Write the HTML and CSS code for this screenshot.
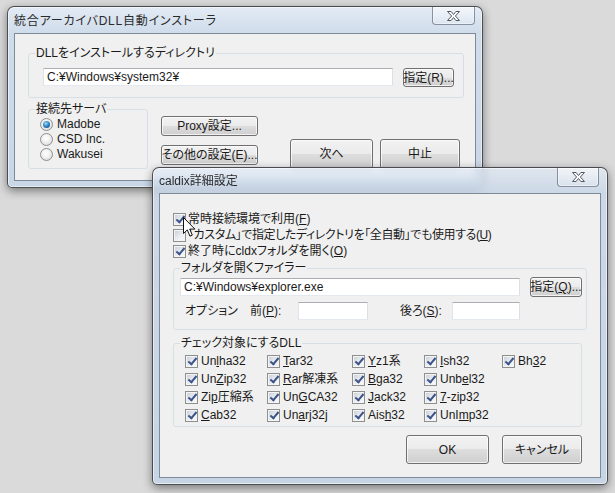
FILE: index.html
```html
<!DOCTYPE html>
<html lang="ja">
<head>
  <meta charset="UTF-8">
  <title>統合アーカイバDLL自動インストーラ</title>
  <link rel="stylesheet" href="styles.css">
</head>
<body>
<div class="desktop">

  <!-- メインウィンドウ -->
  <div class="window main-win">
    <div class="titlebar">
      <span class="title main-title">統合アーカイバDLL自動インストーラ</span>
      <span class="close">
        <svg width="15" height="12" viewBox="0 0 15 12"><path d="M1.5 1.5h3.6l2.4 3 2.4-3h3.6l-4.1 4.5 4.1 4.5h-3.6l-2.4-3-2.4 3H1.5l4.1-4.5z" fill="#fafbfc" stroke="#55595f" stroke-width="1" stroke-linejoin="round"/></svg>
      </span>
    </div>
    <div class="client main-client">
      <fieldset class="group dir-group">
        <legend>DLLをインストールするディレクトリ</legend>
        <div class="group-body dir-body">
          <div class="field dir-field">C:¥Windows¥system32¥</div>
          <span class="btn ref-btn">指定(R)...</span>
        </div>
      </fieldset>
      <div class="lower">
        <fieldset class="group server-group">
          <legend>接続先サーバ</legend>
          <div class="group-body server-body">
            <label class="radio on"><span class="dot"></span><span>Madobe</span></label>
            <label class="radio"><span class="dot"></span><span>CSD Inc.</span></label>
            <label class="radio"><span class="dot"></span><span>Wakusei</span></label>
          </div>
        </fieldset>
        <div class="mid-buttons">
          <span class="btn wide-btn">Proxy設定...</span>
          <span class="btn wide-btn">その他の設定(E)...</span>
        </div>
        <div class="main-buttons">
          <span class="btn next-btn">次へ</span>
          <span class="btn stop-btn">中止</span>
        </div>
      </div>
    </div>
  </div>

  <!-- caldix詳細設定 -->
  <div class="window sub-win">
    <div class="titlebar sub-title">
      <span class="title">caldix詳細設定</span>
      <span class="close">
        <svg width="15" height="12" viewBox="0 0 15 12"><path d="M1.5 1.5h3.6l2.4 3 2.4-3h3.6l-4.1 4.5 4.1 4.5h-3.6l-2.4-3-2.4 3H1.5l4.1-4.5z" fill="#fafbfc" stroke="#55595f" stroke-width="1" stroke-linejoin="round"/></svg>
      </span>
    </div>
    <div class="client sub-client">
      <div class="opts">
        <label class="check on"><span class="box"></span><span>常時接続環境で利用(<u>F</u>)</span></label>
        <label class="check"><span class="box"></span><span class="tight">「カスタム」で指定したディレクトリを「全自動」でも使用する(<u>U</u>)</span></label>
        <label class="check on"><span class="box"></span><span>終了時にcldxフォルダを開く(<u>O</u>)</span></label>
      </div>

      <fieldset class="group filer-group">
        <legend>フォルダを開くファイラー</legend>
        <div class="group-body filer-body">
          <div class="filer-row">
            <div class="field filer-field">C:¥Windows¥explorer.exe</div>
            <span class="btn ref-btn q-btn"><span>指定(<u>Q</u>)...</span></span>
          </div>
          <div class="option-row">
            <span class="opt-caption">オプション</span>
            <span class="opt-pre">前(<u>P</u>):</span>
            <div class="field opt-field"></div>
            <span class="opt-post">後ろ(<u>S</u>):</span>
            <div class="field opt-field post-field"></div>
          </div>
        </div>
      </fieldset>

      <fieldset class="group dll-group">
        <legend>チェック対象にするDLL</legend>
        <div class="group-body dll-grid">
          <label class="check on"><span class="box"></span><span>Un<u>l</u>ha32</span></label>
          <label class="check on"><span class="box"></span><span><u>T</u>ar32</span></label>
          <label class="check on"><span class="box"></span><span><u>Y</u>z1系</span></label>
          <label class="check on"><span class="box"></span><span><u>I</u>sh32</span></label>
          <label class="check on"><span class="box"></span><span>Bh<u>3</u>2</span></label>

          <label class="check on"><span class="box"></span><span>Un<u>Z</u>ip32</span></label>
          <label class="check on"><span class="box"></span><span><u>R</u>ar解凍系</span></label>
          <label class="check on"><span class="box"></span><span><u>B</u>ga32</span></label>
          <label class="check on"><span class="box"></span><span>Unb<u>e</u>l32</span></label>
          <span></span>

          <label class="check on"><span class="box"></span><span>Zi<u>p</u>圧縮系</span></label>
          <label class="check on"><span class="box"></span><span>Un<u>G</u>CA32</span></label>
          <label class="check on"><span class="box"></span><span><u>J</u>ack32</span></label>
          <label class="check on"><span class="box"></span><span><u>7</u>-zip32</span></label>
          <span></span>

          <label class="check on"><span class="box"></span><span><u>C</u>ab32</span></label>
          <label class="check on"><span class="box"></span><span>Un<u>a</u>rj32j</span></label>
          <label class="check on"><span class="box"></span><span>Ais<u>h</u>32</span></label>
          <label class="check on"><span class="box"></span><span>UnI<u>m</u>p32</span></label>
          <span></span>
        </div>
      </fieldset>

      <div class="dialog-buttons">
        <span class="btn ok-btn">OK</span>
        <span class="btn cancel-btn">キャンセル</span>
      </div>
    </div>
  </div>

  <!-- マウスカーソル -->
  <svg class="cursor" width="13" height="21" viewBox="0 0 13 21"><path d="M0.5 0.5v16l3.8-3.6 2.6 6.2 2.4-1-2.6-6h5.2z" fill="#fff" stroke="#111" stroke-width="1" stroke-linejoin="round"/></svg>
</div>
</body>
</html>
```

FILE: styles.css
```css
* { box-sizing: border-box; }
body {
  margin: 0;
  width: 615px;
  height: 493px;
  overflow: hidden;
  background: #dadada;
  font-family: "Liberation Sans", "Noto Sans CJK JP", sans-serif;
  font-size: 12px;
  font-feature-settings: "palt";
  color: #1a1a1a;
}
.desktop {
  position: relative;
  width: 615px;
  height: 493px;
}

/* ウィンドウ枠 */
.window {
  position: absolute;
  display: flex;
  flex-direction: column;
  padding: 0 6px 6px;
  border: 1px solid rgba(30, 30, 30, .75);
  border-radius: 7px 7px 5px 5px;
  background: linear-gradient(#e3ebf5, #cfdcea 26px, #c8d6e6);
  box-shadow: inset 0 0 0 1px rgba(255, 255, 255, .55), 0 3px 10px rgba(0, 0, 0, .45);
}
.main-win {
  left: 7px;
  top: 6px;
  width: 476px;
  height: 182px;
}
.sub-win {
  left: 152px;
  top: 167px;
  width: 456px;
  height: 318px;
  background: linear-gradient(rgba(225, 234, 246, .72), rgba(200, 215, 233, .82) 26px, rgba(196, 211, 229, .9));
  backdrop-filter: blur(3px);
}
.titlebar {
  display: flex;
  align-items: flex-start;
  height: 26px;
  flex: none;
}
.sub-title { height: 25px; }
.title {
  align-self: center;
  color: #2a2a2a;
  line-height: 14px;
  margin-top: 1px;
}
.main-title { letter-spacing: .8px; }
.close {
  margin-left: auto;
  margin-right: 1px;
  width: 43px;
  height: 18px;
  display: flex;
  align-items: center;
  justify-content: center;
  border: 1px solid rgba(70, 80, 100, .6);
  border-top: none;
  border-radius: 0 0 4px 4px;
  background: linear-gradient(rgba(255, 255, 255, .55), rgba(255, 255, 255, .15));
  box-shadow: inset 0 0 0 1px rgba(255, 255, 255, .45);
}
.sub-win .close { margin-right: 2px; width: 42px; height: 19px; }

.client {
  flex: 1;
  background: #f0f0f0;
  border: 1px solid #7d8a99;
}

/* 共通部品 */
.group {
  margin: 0;
  padding: 0;
  border: 1px solid #d5dfe5;
  border-radius: 3px;
  min-width: 0;
}
.group legend {
  margin-left: 6px;
  padding: 0 1px;
  line-height: 14px;
}
.field {
  height: 18px;
  background: #fff;
  border: 1px solid;
  border-color: #abadb3 #dbdfe6 #e3e9ef #e2e3ea;
  padding-left: 3px;
  line-height: 16px;
  white-space: nowrap;
}
.btn {
  display: flex;
  align-items: center;
  justify-content: center;
  border: 1px solid #707070;
  border-radius: 3px;
  background: linear-gradient(#f2f2f2, #ebebeb 50%, #dddddd 50%, #cfcfcf);
  box-shadow: inset 0 0 0 1px rgba(255, 255, 255, .7);
  white-space: nowrap;
  line-height: 14px;
  flex: none;
}
.radio, .check {
  display: flex;
  align-items: center;
  white-space: nowrap;
}
.radio {
  height: 15px;
  line-height: 15px;
  gap: 4px;
}
.dot {
  position: relative;
  width: 13px;
  height: 13px;
  border-radius: 50%;
  border: 1px solid #8e8f8f;
  background: radial-gradient(circle at 45% 40%, #ffffff, #f0f0f0 45%, #cdcdcd);
  flex: none;
}
.radio.on .dot::after {
  content: "";
  position: absolute;
  left: 2px;
  top: 2px;
  width: 7px;
  height: 7px;
  border-radius: 50%;
  background: radial-gradient(circle at 40% 35%, #9fdcfa, #2d7fc0 50%, #163f73);
}
.check {
  gap: 2px;
  height: 16px;
  line-height: 16px;
}
.tight { letter-spacing: -.4px; }
.box {
  position: relative;
  width: 13px;
  height: 13px;
  border: 1px solid #8e8f8f;
  background: linear-gradient(135deg, #c6ccd6, #eef0f4 60%, #fafafa);
  box-shadow: inset 0 0 0 1px #f4f4f4;
  flex: none;
}
.check.on .box::after {
  content: "";
  position: absolute;
  left: 3.5px;
  top: 0.5px;
  width: 3px;
  height: 7px;
  border: solid #3d5488;
  border-width: 0 2px 2px 0;
  transform: rotate(40deg);
}
u { text-underline-offset: 1px; }

/* メインウィンドウ */
.main-client {
  padding: 12px 0 0 13px;
}
.dir-group { width: 436px; }
.dir-body {
  display: flex;
  align-items: flex-start;
  padding: 8px 0 10px 14px;
}
.dir-field { width: 350px; }
.ref-btn {
  margin-left: 10px;
  width: 51px;
  height: 19px;
}
.lower {
  display: flex;
  align-items: flex-start;
  margin-top: 4px;
}
.server-group { width: 120px; }
.server-body { padding: 1px 0 6px 11px; }
.mid-buttons {
  display: flex;
  flex-direction: column;
  gap: 9px;
  margin: 14px 0 0 13px;
}
.wide-btn { width: 97px; height: 20px; }
.main-buttons {
  display: flex;
  gap: 7px;
  margin: 37px 0 0 32px;
}
.next-btn { width: 83px; height: 30px; }
.stop-btn { width: 80px; height: 30px; }

/* 詳細設定 */
.sub-client {
  padding: 17px 0 0 13px;
}
.filer-group {
  width: 414px;
  margin-top: 2px;
}
.filer-body { padding: 2px 0 9px 6px; }
.filer-row {
  display: flex;
  align-items: center;
  height: 20px;
}
.filer-field { width: 340px; }
.q-btn { width: 52px; height: 20px; }
.option-row {
  display: flex;
  align-items: center;
  height: 18px;
  line-height: 18px;
  margin-top: 5px;
}
.opt-caption { margin-left: 5px; width: 65px; }
.opt-pre { width: 48px; }
.opt-field { width: 70px; }
.opt-post { margin-left: 32px; width: 52px; }
.post-field { width: 68px; }
.dll-group {
  width: 409px;
  margin-top: 6px;
}
.dll-grid {
  display: grid;
  grid-template-columns: 82px 85px 72px 78px auto;
  grid-auto-rows: 18px;
  padding: 2px 0 2px 11px;
}
.dll-grid .check { height: 18px; line-height: 18px; gap: 3px; }
.dialog-buttons {
  display: flex;
  justify-content: flex-end;
  gap: 13px;
  margin-top: 8px;
  padding-right: 18px;
}
.ok-btn { width: 83px; height: 29px; }
.cancel-btn { width: 80px; height: 29px; }

.cursor {
  position: absolute;
  left: 183px;
  top: 217px;
}
```
